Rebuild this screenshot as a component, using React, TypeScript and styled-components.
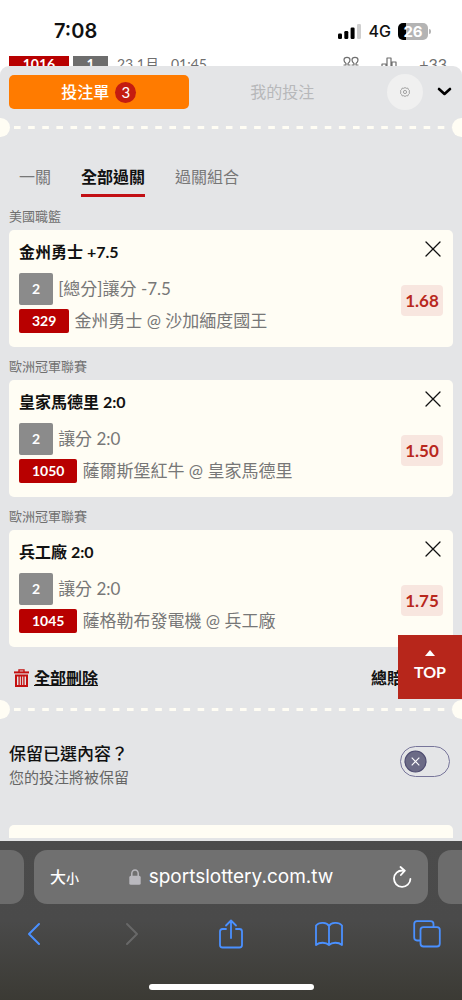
import React, { useState } from "react";
import styled, { createGlobalStyle } from "styled-components";

const cream = "#fffdf4";
const panelGrey = "#e4e5e7";
const red = "#b80000";
const brick = "#b7261b";
const iosBlue = "#4a90ff";

const GlobalStyle = createGlobalStyle`
  *, *::before, *::after { box-sizing: border-box; }
  body {
    margin: 0;
    background: #fff;
    color: #111;
    font-family: Lato, "Noto Sans CJK TC", sans-serif;
    font-size: 16px;
    line-height: 24px;
  }
  button {
    margin: 0;
    padding: 0;
    border: 0;
    background: none;
    color: inherit;
    font: inherit;
    cursor: pointer;
  }
  h2, p { margin: 0; }
  svg { display: block; flex: none; }
`;

const Screen = styled.div`
  display: flex;
  flex-direction: column;
  min-height: 100vh;
`;

/* ---------- phone status bar ---------- */
const StatusBar = styled.header`
  display: flex;
  justify-content: space-between;
  align-items: center;
  height: 56px;
  padding: 6px 31px 0 54px;
  font-family: Inter, sans-serif;
`;
const Clock = styled.time`
  font-size: 20px;
  font-weight: 600;
`;
const Signals = styled.div`
  display: flex;
  align-items: center;
  gap: 7px;
  font-size: 16px;
  font-weight: 500;
`;
const Battery = styled.div`
  display: flex;
  align-items: center;
  gap: 1px;
`;
const BatteryLevel = styled.span`
  width: 30px;
  height: 17px;
  border-radius: 5px;
  background: linear-gradient(90deg, #000 28%, #b4b4b4 28%);
  color: #fff;
  font-size: 15px;
  font-weight: 700;
  line-height: 17px;
  text-align: center;
`;
const BatteryNub = styled.span`
  width: 2px;
  height: 5px;
  border-radius: 0 2px 2px 0;
  background: #b4b4b4;
`;

/* ---------- event strip behind the slip ---------- */
const EventStrip = styled.div`
  display: flex;
  align-items: flex-start;
  gap: 4px;
  height: 10px;
  padding: 0 15px 0 9px;
  overflow: hidden;
  color: #6f6f6f;
  font-size: 16px;
  line-height: 16px;
`;
const EventTag = styled.span<{ $grey?: boolean }>`
  width: ${(p) => (p.$grey ? 35 : 60)}px;
  background: ${(p) => (p.$grey ? "#6d6d6d" : red)};
  color: #fff;
  font-size: 14px;
  font-weight: 700;
  text-align: center;
`;
const EventTime = styled.span`
  display: flex;
  flex: 1;
  gap: 12px;
  padding-left: 5px;
  font-size: 14px;
`;
const EventTools = styled.span`
  display: flex;
  align-items: flex-start;
  gap: 22px;
`;

/* ---------- betting slip ---------- */
const Slip = styled.main`
  flex: 1;
  display: flex;
  flex-direction: column;
  padding-top: 9px;
  border-radius: 9px 9px 0 0;
  background: ${panelGrey};
  overflow: hidden;
`;
const SlipHeader = styled.div`
  display: flex;
  align-items: center;
  height: 34px;
  padding: 0 10px 0 9px;
`;
const SlipTabs = styled.div`
  display: flex;
  flex: 1;
  gap: 4px;
`;
const SlipTab = styled.button<{ $active?: boolean }>`
  display: flex;
  flex: 1;
  align-items: center;
  justify-content: center;
  gap: 6px;
  height: 34px;
  border-radius: 5px;
  background: ${(p) => (p.$active ? "#ff7b00" : "transparent")};
  color: ${(p) => (p.$active ? "#fff" : "#b7b8ba")};
  font-weight: ${(p) => (p.$active ? 500 : 400)};
`;
const Count = styled.span`
  width: 21px;
  height: 21px;
  border-radius: 50%;
  background: #c41c10;
  font-size: 15px;
  font-weight: 400;
  line-height: 21px;
`;
const Settings = styled.button`
  display: grid;
  place-items: center;
  width: 36px;
  height: 36px;
  margin: 0 14px 0 15px;
  border-radius: 50%;
  background: #f0f0f0;
`;

const PerforationSpace = styled.div<{ $top?: boolean }>`
  padding: ${(p) => (p.$top ? "9px 0 28px" : "0 0 8px")};
`;
const Perforation = styled.div`
  display: flex;
  align-items: center;
  height: 19px;
  &::before,
  &::after {
    content: "";
    width: 10px;
    height: 19px;
    background: ${cream};
  }
  &::before { border-radius: 0 10px 10px 0; }
  &::after { border-radius: 10px 0 0 10px; }
`;
const Dashes = styled.div`
  flex: 1;
  height: 3px;
  margin-left: 4px;
  background: linear-gradient(90deg, ${cream} 50%, transparent 50%) 0 0 / 14px 3px round;
`;

const ModeTabs = styled.nav`
  display: flex;
  gap: 30px;
  padding: 0 19px;
`;
const ModeTab = styled.button<{ $active?: boolean }>`
  height: 32px;
  padding-bottom: 5px;
  border-bottom: 3px solid ${(p) => (p.$active ? "#c20f14" : "transparent")};
  color: ${(p) => (p.$active ? "#111" : "#777")};
  font-weight: ${(p) => (p.$active ? 700 : 400)};
`;

const Bets = styled.div`
  display: flex;
  flex-direction: column;
  padding: 0 9px;
`;
const League = styled.p`
  height: 33px;
  padding-top: 7px;
  color: #707070;
  font-size: 13px;
`;
const BetCard = styled.article`
  display: flex;
  justify-content: space-between;
  padding: 10px 10px 14px;
  border-radius: 5px;
  background: ${cream};
`;
const BetInfo = styled.div`
  display: flex;
  flex-direction: column;
  gap: 4px;
`;
const BetTitle = styled.h2`
  margin-bottom: 5px;
  font-size: 16px;
  font-weight: 700;
  line-height: 24px;
`;
const BetLine = styled.div`
  display: flex;
  align-items: center;
  gap: 5px;
  color: #777;
  font-size: 17px;
`;
const Tag = styled.span<{ $red?: boolean }>`
  padding: 0 13px;
  border-radius: 2px;
  background: ${(p) => (p.$red ? red : "#8b8b8b")};
  color: #fff;
  font-size: 14px;
  font-weight: 700;
  line-height: ${(p) => (p.$red ? 24 : 32)}px;
`;
const BetSide = styled.div`
  display: flex;
  flex-direction: column;
  align-items: flex-end;
  gap: 27px;
`;
const CloseButton = styled.button`
  display: grid;
  place-items: center;
  width: 20px;
  height: 18px;
`;
const Odds = styled.span`
  min-width: 42px;
  padding: 0 4px;
  border-radius: 4px;
  background: #f8e6df;
  color: #b8281d;
  font-size: 17px;
  font-weight: 700;
  line-height: 31px;
  text-align: center;
`;

const ActionRow = styled.div`
  display: flex;
  align-items: center;
  justify-content: space-between;
  height: 53px;
  padding: 8px 43px 0 14px;
  font-weight: 700;
`;
const ClearButton = styled.button`
  display: flex;
  align-items: center;
  gap: 5px;
  text-decoration: underline;
`;
const KeepRow = styled.div`
  display: flex;
  align-items: center;
  justify-content: space-between;
  padding: 15px 12px 37px 9px;
`;
const KeepText = styled.label`
  display: flex;
  flex-direction: column;
  font-size: 17px;
  font-weight: 500;
`;
const KeepNote = styled.span`
  color: #666;
  font-size: 15px;
  font-weight: 400;
  line-height: 22px;
`;
const Switch = styled.span`
  position: relative;
  display: flex;
  padding-bottom: 8px;
  svg {
    position: absolute;
    top: 4px;
    left: 4px;
    pointer-events: none;
  }
`;
const SwitchInput = styled.input`
  appearance: none;
  width: 50px;
  height: 31px;
  margin: 0;
  border: 1px solid #77759a;
  border-radius: 16px;
  cursor: pointer;
  &:checked + svg { left: 23px; }
`;
const NextCard = styled.div`
  flex: 1;
  min-height: 13px;
  margin: 0 9px 3px;
  border-radius: 5px 5px 0 0;
  background: ${cream};
`;
const TopButton = styled.button`
  position: fixed;
  right: 0;
  bottom: 301px;
  display: flex;
  flex-direction: column;
  align-items: center;
  justify-content: center;
  gap: 4px;
  width: 64px;
  height: 64px;
  background: ${brick};
  color: #fff;
  font-size: 16px;
  font-weight: 700;
`;

/* ---------- browser chrome ---------- */
const Browser = styled.footer`
  display: flex;
  flex-direction: column;
  align-items: center;
  height: 159px;
  padding: 9px 0;
  background: linear-gradient(#4b4b4b, #4a4a4a 50%, #3b3a34);
`;
const Tiles = styled.div`
  display: flex;
  align-self: stretch;
  gap: 10px;
`;
const TabEdge = styled.div<{ $side: "left" | "right" }>`
  width: 24px;
  border-radius: ${(p) => (p.$side === "left" ? "0 13px 13px 0" : "13px 0 0 13px")};
  background: #6c6c6c;
`;
const AddressBar = styled.div`
  display: grid;
  flex: 1;
  grid-template-columns: 1fr auto 1fr;
  align-items: center;
  height: 54px;
  padding: 0 16px;
  border-radius: 13px;
  background: #707070;
  color: #fff;
`;
const TextSize = styled.button`
  justify-self: start;
  font-size: 16px;
  font-weight: 500;
`;
const SmallGlyph = styled.span`
  font-size: 13px;
`;
const Address = styled.button`
  display: flex;
  align-items: center;
  gap: 8px;
  font-family: Inter, sans-serif;
  font-size: 19px;
`;
const Reload = styled.button`
  justify-self: end;
`;
const Toolbar = styled.nav`
  display: flex;
  align-self: stretch;
  align-items: center;
  justify-content: space-between;
  height: 60px;
  padding: 0 21px 0 20px;
`;
const ToolButton = styled.button`
  display: grid;
  place-items: center;
  width: 28px;
  height: 30px;
`;
const HomeBar = styled.div`
  width: 165px;
  height: 6px;
  margin-top: 20px;
  border-radius: 3px;
  background: #fff;
`;

type Bet = {
  league: string;
  title: string;
  market: string;
  code: string;
  match: string;
  odds: string;
};

const bets: Bet[] = [
  { league: "美國職籃", title: "金州勇士 +7.5", market: "[總分]讓分 -7.5", code: "329", match: "金州勇士 @ 沙加緬度國王", odds: "1.68" },
  { league: "歐洲冠軍聯賽", title: "皇家馬德里 2:0", market: "讓分 2:0", code: "1050", match: "薩爾斯堡紅牛 @ 皇家馬德里", odds: "1.50" },
  { league: "歐洲冠軍聯賽", title: "兵工廠 2:0", market: "讓分 2:0", code: "1045", match: "薩格勒布發電機 @ 兵工廠", odds: "1.75" },
];

const modes = ["一關", "全部過關", "過關組合"];

type LineProps = { d: string; w: number; h: number; color?: string; stroke?: number };

function Line({ d, w, h, color = "currentColor", stroke = 2 }: LineProps) {
  return (
    <svg width={w} height={h} viewBox={`0 0 ${w} ${h}`} fill="none" stroke={color} strokeWidth={stroke} strokeLinecap="round" strokeLinejoin="round" aria-hidden="true">
      <path d={d} />
    </svg>
  );
}

function Perforated({ top }: { top?: boolean }) {
  return (
    <PerforationSpace $top={top}>
      <Perforation>
        <Dashes />
      </Perforation>
    </PerforationSpace>
  );
}

export default function App() {
  const [mode, setMode] = useState(1);
  const [keep, setKeep] = useState(false);

  return (
    <Screen>
      <GlobalStyle />
      <StatusBar>
        <Clock>7:08</Clock>
        <Signals>
          <svg width="24" height="15" viewBox="0 0 24 15" aria-hidden="true">
            <rect x="0" y="9.5" width="4" height="5.5" rx="1.2" />
            <rect x="6.3" y="7" width="4" height="8" rx="1.2" />
            <rect x="12.6" y="3.5" width="4" height="11.5" rx="1.2" />
            <rect x="19" y="0" width="4" height="15" rx="1.2" fill="#cfcfcf" />
          </svg>
          <span>4G</span>
          <Battery>
            <BatteryLevel>26</BatteryLevel>
            <BatteryNub />
          </Battery>
        </Signals>
      </StatusBar>

      <EventStrip>
        <EventTag>1016</EventTag>
        <EventTag $grey>1</EventTag>
        <EventTime>
          <span>23 1月</span>
          <span>01:45</span>
        </EventTime>
        <EventTools>
          <Line w={16} h={20} stroke={1.2} d="M1 9 H3 V7.5 Q1 6 1 4 Q1 1.300 4 1.300 Q7 1.300 7 4 Q7 6 5 7.5 V9 H7 M9 9 H11 V7.5 Q9 6 9 4 Q9 1.300 12 1.300 Q15 1.300 15 4 Q15 6 13 7.5 V9 H15" />
          <Line w={16} h={20} stroke={1.2} d="M1 16 V8 H5 V16 M6 16 V2 H10 V16 M11 16 V6 H15 V16" />
          <span>+33</span>
        </EventTools>
      </EventStrip>

      <Slip>
        <SlipHeader>
          <SlipTabs>
            <SlipTab $active>
              投注單 <Count>3</Count>
            </SlipTab>
            <SlipTab>我的投注</SlipTab>
          </SlipTabs>
          <Settings aria-label="設定">
            <svg width="10" height="10" viewBox="0 0 10 10" fill="none" stroke="#999" strokeWidth="0.9" strokeLinejoin="round" aria-hidden="true">
              <path d="M5 .5 6.2 1.3 7.8 1.1 8.4 2.6 9.6 3.6 9.1 5 9.6 6.4 8.4 7.4 7.8 8.9 6.2 8.7 5 9.5 3.8 8.7 2.2 8.9 1.6 7.4.4 6.4.9 5 .4 3.6 1.6 2.6 2.2 1.1 3.8 1.3Z" />
              <circle cx="5" cy="5" r="1.6" />
            </svg>
          </Settings>
          <button aria-label="收合">
            <Line w={15} h={10} stroke={2.6} color="#000" d="M2 2 7.5 7 13 2" />
          </button>
        </SlipHeader>

        <Perforated top />

        <ModeTabs>
          {modes.map((name, i) => (
            <ModeTab key={name} $active={i === mode} onClick={() => setMode(i)}>
              {name}
            </ModeTab>
          ))}
        </ModeTabs>

        <Bets>
          {bets.map((bet) => (
            <React.Fragment key={bet.code}>
              <League>{bet.league}</League>
              <BetCard>
                <BetInfo>
                  <BetTitle>{bet.title}</BetTitle>
                  <BetLine>
                    <Tag>2</Tag>
                    <span>{bet.market}</span>
                  </BetLine>
                  <BetLine>
                    <Tag $red>{bet.code}</Tag>
                    <span>{bet.match}</span>
                  </BetLine>
                </BetInfo>
                <BetSide>
                  <CloseButton aria-label="移除">
                    <Line w={16} h={16} stroke={1.3} d="M1 1 15 15 M15 1 1 15" />
                  </CloseButton>
                  <Odds>{bet.odds}</Odds>
                </BetSide>
              </BetCard>
            </React.Fragment>
          ))}
        </Bets>

        <ActionRow>
          <ClearButton>
            <svg width="15" height="18" viewBox="0 0 15 18" fill="none" stroke="#c41010" aria-hidden="true">
              <path d="M0 3.4H15" strokeWidth="2" />
              <path d="M5 3V.9H10V3" strokeWidth="1.4" />
              <path d="M2 6.400H13V17H2Z" strokeWidth="2" />
              <path d="M5.100 6V17M7.500 6V17M9.900 6V17" strokeWidth="1.3" />
            </svg>
            全部刪除
          </ClearButton>
          <span>總賠率</span>
        </ActionRow>

        <Perforated />

        <KeepRow>
          <KeepText htmlFor="keep">
            保留已選內容？
            <KeepNote>您的投注將被保留</KeepNote>
          </KeepText>
          <Switch>
            <SwitchInput id="keep" type="checkbox" role="switch" checked={keep} onChange={(e) => setKeep(e.target.checked)} />
            <svg width="23" height="23" viewBox="0 0 23 23" fill="none" aria-hidden="true">
              <circle cx="11.5" cy="11.5" r="10.5" fill="#6c6b86" stroke="#4d4b70" strokeWidth="1.2" />
              <path d="M7.7 7.7 15.3 15.3M15.3 7.7 7.7 15.3" stroke="#fff" strokeWidth="1.1" />
            </svg>
          </Switch>
        </KeepRow>

        <NextCard />
      </Slip>

      <TopButton onClick={() => window.scrollTo(0, 0)}>
        <svg width="10" height="6" viewBox="0 0 10 6" fill="#fff" aria-hidden="true">
          <path d="M5 0 10 6H0Z" />
        </svg>
        TOP
      </TopButton>

      <Browser>
        <Tiles>
          <TabEdge $side="left" />
          <AddressBar>
            <TextSize>
              大<SmallGlyph>小</SmallGlyph>
            </TextSize>
            <Address>
              <svg width="12" height="16" viewBox="0 0 12 16" aria-hidden="true">
                <path d="M2.8 8V4.5a3.2 3.6 0 0 1 6.4 0V8" fill="none" stroke="#b9b8be" strokeWidth="1.5" />
                <rect x="0.3" y="6.8" width="11.4" height="9" rx="1.6" fill="#b9b8be" />
              </svg>
              sportslottery.com.tw
            </Address>
            <Reload aria-label="重新載入">
              <Line w={20} h={23} stroke={1.8} d="M10.5 4.5A8.2 8.2 0 1 0 18.4 13 M8.5 1 12.8 4.7 8.9 9" />
            </Reload>
          </AddressBar>
          <TabEdge $side="right" />
        </Tiles>
        <Toolbar>
          <ToolButton aria-label="上一頁">
            <Line w={20} h={24} color={iosBlue} d="M15 2 5 12 15 22" />
          </ToolButton>
          <ToolButton aria-label="下一頁">
            <Line w={20} h={24} color="#686868" d="M5 2 15 12 5 22" />
          </ToolButton>
          <ToolButton aria-label="分享">
            <Line w={26} h={30} stroke={1.8} color={iosBlue} d="M8 10H4.500Q2 10 2 12.500V26Q2 28.500 4.500 28.500H21.500Q24 28.500 24 26V12.500Q24 10 21.500 10H18 M13 19V2 M8 6.500 13 1.500 18 6.500" />
          </ToolButton>
          <ToolButton aria-label="書籤">
            <Line w={28} h={26} stroke={1.8} color={iosBlue} d="M14 5C12 1.500 4.500 .5 1 4.500V24C4.500 21 11 21 14 24C17 21 23.500 21 27 24V4.500C23.500 .5 16 1.500 14 5V24" />
          </ToolButton>
          <ToolButton aria-label="分頁">
            <Line w={28} h={28} stroke={1.8} color={iosBlue} d="M7.500 20.500H4Q1.200 20.500 1.200 17.500V4Q1.200 1.200 4 1.200H17.500Q20.500 1.200 20.500 4V7.200 M10.500 7.200H24Q26.800 7.200 26.800 10V23.500Q26.800 26.500 24 26.500H10.500Q7.500 26.500 7.500 23.500V10Q7.500 7.200 10.500 7.200Z" />
          </ToolButton>
        </Toolbar>
        <HomeBar />
      </Browser>
    </Screen>
  );
}
